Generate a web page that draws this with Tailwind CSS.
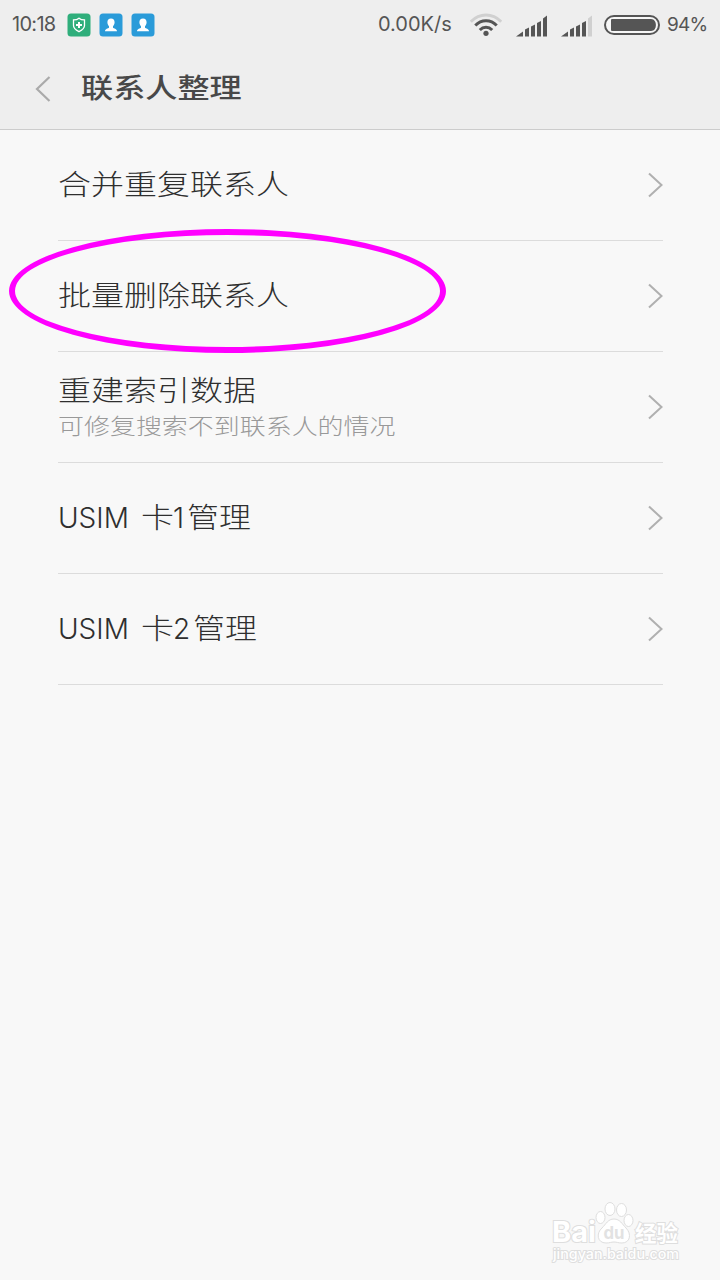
<!DOCTYPE html>
<html lang="zh-CN">
<head>
    <meta charset="UTF-8">
    <meta name="viewport" content="width=device-width, initial-scale=1">
    <title>联系人整理</title>
    <script src="https://cdn.jsdelivr.net/npm/@tailwindcss/browser@4"></script>
</head>
<body class="relative w-[720px] h-[1280px] overflow-hidden bg-[#f8f8f8] text-[#2f2f2f] font-['Inter','Noto_Sans_CJK_SC',sans-serif]">
    <!-- Header -->
    <header class="h-[130px] bg-[#eeeeee] border-b border-[#cccccc]">
        <!-- Status bar -->
        <div class="flex items-center h-12 pl-3 text-[20px] leading-none text-[#555555]">
            <span class="w-[55px] whitespace-nowrap tracking-[-0.7px]">10:18</span>
            <svg class="mt-0.5 shrink-0" width="24" height="24" viewBox="0 0 24 24">
                <rect x=".5" y=".5" width="23" height="23" rx="3.5" fill="#2fae7b"/>
                <path d="M12 5.2c1.8 1.5 3.500 1.700 5.500 1.700v5.600c0 3-2.500 4.700-5.500 6.200-3-1.500-5.500-3.200-5.500-6.200V6.900c2 0 3.700-.2 5.500-1.700z" fill="none" stroke="#fff" stroke-width="1.300"/>
                <path d="M12 9v6M9 12h6" stroke="#fff" stroke-width="2"/>
            </svg>
            <svg class="mt-0.5 ml-2 shrink-0" width="24" height="24" viewBox="0 0 24 24">
                <rect x=".5" y=".5" width="23" height="23" rx="3.500" fill="#2a9bd9"/>
                <path d="M12 5.500c2.400 0 3.600 1.500 3.600 3.700 0 1.800-.8 3-1.600 4v1.600c.8 1 3.800.8 4 3.400H6c.2-2.600 3.200-2.400 4-3.400v-1.600c-.8-1-1.600-2.200-1.600-4 0-2.200 1.200-3.700 3.600-3.700z" fill="#fff"/>
            </svg>
            <svg class="mt-0.5 ml-2 shrink-0" width="24" height="24" viewBox="0 0 24 24">
                <rect x=".5" y=".5" width="23" height="23" rx="3.500" fill="#2a9bd9"/>
                <path d="M12 5.500c2.400 0 3.600 1.500 3.600 3.700 0 1.800-.8 3-1.600 4v1.600c.8 1 3.800.8 4 3.400H6c.2-2.600 3.200-2.400 4-3.400v-1.600c-.8-1-1.600-2.200-1.600-4 0-2.200 1.200-3.700 3.600-3.700z" fill="#fff"/>
            </svg>
            <span class="ml-[223px] w-[92px] whitespace-nowrap">0.00K/s</span>
            <!-- Wifi -->
            <svg class="mt-0.5 shrink-0" width="32" height="24" viewBox="0 0 32 24" fill="none" stroke="#555" stroke-width="3">
                <path d="M.8 8.800C9.500-.2 22.500-.2 31.200 8.800" stroke="#d0d0d0"/>
                <path d="M5.300 12.500c6-6.300 15.400-6.300 21.400 0"/>
                <path d="M9.800 17c3.600-3.700 8.800-3.700 12.400 0"/>
                <circle cx="16" cy="20.300" r="2.600" fill="#555" stroke="none"/>
            </svg>
            <!-- Signal, SIM 1 and SIM 2 -->
            <svg class="mt-1 ml-3.5 shrink-0" width="32" height="22" viewBox="0 0 32 22" fill="#555">
                <path d="M0 21.500l7-5v5zM9 14.500l4-2v9H9zM15 11.500l4-2v12h-4zM21 8l4-2v15.500h-4zM27 3.500L31 .5v21h-4z"/>
            </svg>
            <svg class="mt-1 ml-[13px] shrink-0" width="32" height="22" viewBox="0 0 32 22" fill="#555">
                <path d="M0 21.500l7-5v5zM9 14.500l4-2v9H9zM15 11.500l4-2v12h-4zM21 8l4-2v15.500h-4z"/>
                <path d="M27 3.500L31 .5v21h-4z" fill="#d0d0d0"/>
            </svg>
            <!-- Battery -->
            <svg class="mt-0.5 ml-[11px] shrink-0" width="56" height="20" viewBox="0 0 56 20">
                <rect x="1" y="1" width="54" height="18" rx="9" fill="#f6f6f6" stroke="#555" stroke-width="2"/>
                <path d="M8 4h39c6.500 0 6.500 12 0 12H8q-1 0-1-1V5q0-1 1-1z" fill="#555"/>
            </svg>
            <span class="ml-[7px] whitespace-nowrap text-[19px] tracking-[-0.8px]">94%</span>
        </div>
        <!-- Title bar -->
        <div class="flex items-center h-20 pl-[35px]">
            <svg class="mt-0.5" width="16" height="28" viewBox="0 0 16 28" fill="none" stroke="#aaa" stroke-width="2.200">
                <path d="M14.500 2L2 14l12.500 12"/>
            </svg>
            <h1 class="ml-[30px] origin-left scale-x-[1.19] text-[27px] leading-none font-medium text-[#484848]">联系人整理</h1>
        </div>
    </header>

    <!-- Options -->
    <main class="pl-[58px] pr-[57px]">
        <div class="flex items-center justify-between h-[111px] border-b border-[#dcdcdc]">
            <p class="origin-left scale-x-[1.178] text-[28px] leading-none font-light">合并重复联系人</p>
            <svg width="15" height="26" viewBox="0 0 15 26" fill="none" stroke="#b0b0b0" stroke-width="2"><path d="M1 1.500L13.500 13 1 24.500"/></svg>
        </div>
        <div class="flex items-center justify-between h-[111px] border-b border-[#dcdcdc]">
            <p class="origin-left scale-x-[1.178] text-[28px] leading-none font-light">批量删除联系人</p>
            <svg width="15" height="26" viewBox="0 0 15 26" fill="none" stroke="#b0b0b0" stroke-width="2"><path d="M1 1.500L13.500 13 1 24.500"/></svg>
        </div>
        <div class="flex items-center justify-between h-[111px] border-b border-[#dcdcdc]">
            <div>
                <p class="origin-left scale-x-[1.178] text-[28px] leading-none font-light">重建索引数据</p>
                <p class="mt-2.5 origin-left scale-x-[1.18] text-[22px] leading-none font-light text-[#999999]">可修复搜索不到联系人的情况</p>
            </div>
            <svg width="15" height="26" viewBox="0 0 15 26" fill="none" stroke="#b0b0b0" stroke-width="2"><path d="M1 1.500L13.500 13 1 24.500"/></svg>
        </div>
        <div class="flex items-center justify-between h-[111px] border-b border-[#dcdcdc]">
            <p class="flex text-[28px] leading-none font-light">
                <span class="w-[83px] whitespace-pre">USIM </span>
                <span class="w-[32px] origin-left scale-x-[1.178]">卡</span>
                <span class="w-[14px]">1</span>
                <span class="origin-left scale-x-[1.14]">管理</span>
            </p>
            <svg width="15" height="26" viewBox="0 0 15 26" fill="none" stroke="#b0b0b0" stroke-width="2"><path d="M1 1.500L13.500 13 1 24.500"/></svg>
        </div>
        <div class="flex items-center justify-between h-[111px] border-b border-[#dcdcdc]">
            <p class="flex text-[28px] leading-none font-light">
                <span class="w-[83px] whitespace-pre">USIM </span>
                <span class="w-[32px] origin-left scale-x-[1.178]">卡</span>
                <span class="w-[20px]">2</span>
                <span class="origin-left scale-x-[1.14]">管理</span>
            </p>
            <svg width="15" height="26" viewBox="0 0 15 26" fill="none" stroke="#b0b0b0" stroke-width="2"><path d="M1 1.500L13.500 13 1 24.500"/></svg>
        </div>
    </main>

    <!-- Highlight ring -->
    <div class="absolute left-[9px] top-[229px] w-[437px] h-[124px] rounded-[50%] border-6 border-[#ff00ff]"></div>

    <!-- Watermark -->
    <svg class="absolute left-[540px] top-[1190px]" width="150" height="80" viewBox="0 0 150 80" fill="#fff" stroke="#dedede" stroke-width="1">
        <g font-family="Inter, 'Noto Sans CJK SC', sans-serif" font-weight="700" paint-order="stroke" stroke-width="2">
            <text x="12" y="52" font-size="28" textLength="44" lengthAdjust="spacingAndGlyphs">Bai</text>
            <text x="95" y="51" font-size="22" textLength="43" lengthAdjust="spacingAndGlyphs">经验</text>
            <text x="13" y="69" font-size="14" font-weight="500" textLength="126" lengthAdjust="spacingAndGlyphs">jingyan.baidu.com</text>
        </g>
        <ellipse cx="60.500" cy="27.500" rx="4.500" ry="6"/>
        <ellipse cx="70" cy="19" rx="5" ry="6.500"/>
        <ellipse cx="81.500" cy="20" rx="5" ry="6.500"/>
        <ellipse cx="88.500" cy="30.500" rx="4.500" ry="6"/>
        <path d="M74 29c6 0 8 5 12 9 6 6 4 15-4 15-4 0-5-1-8-1s-4 1-8 1c-9 0-10-10-4-15 4-4 6-9 12-9z"/>
        <text x="63.500" y="49" font-family="Inter, sans-serif" font-size="18" font-weight="700" fill="#e2e2e2" stroke="none" textLength="21" lengthAdjust="spacingAndGlyphs">du</text>
    </svg>
</body>
</html>
